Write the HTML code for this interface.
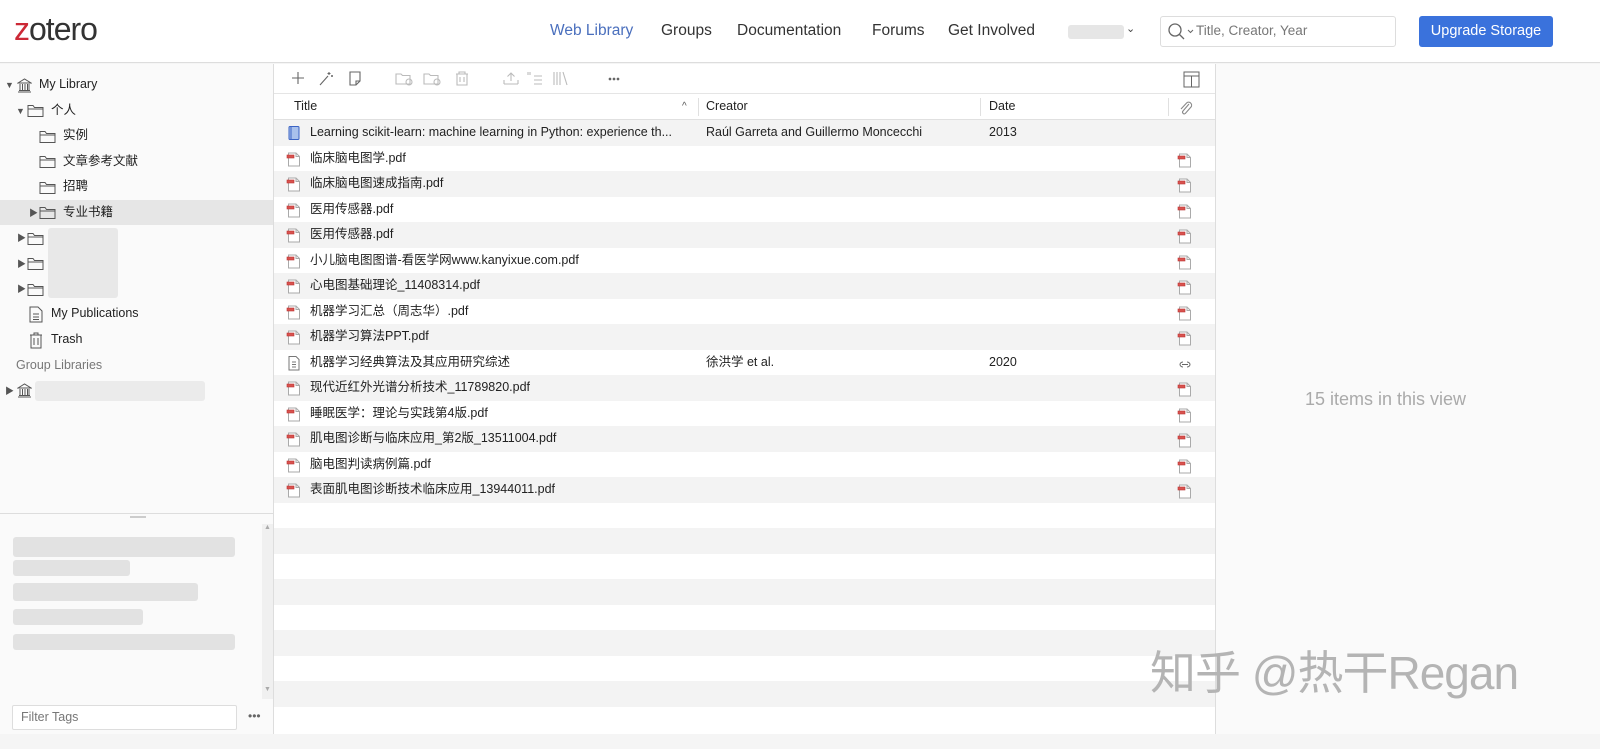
<!DOCTYPE html>
<html><head><meta charset="utf-8">
<style>
*{box-sizing:border-box;margin:0;padding:0}
body{width:1600px;height:749px;overflow:hidden;background:#f5f5f5;font-family:"Liberation Sans","Noto Sans CJK SC",sans-serif;font-size:12.5px;color:#222;position:relative}
.abs{position:absolute}
#top{left:0;top:0;width:1600px;height:63px;background:#fff;border-bottom:1px solid #ddd}
.nav{top:22px;font-size:15.5px;color:#333}
#left{left:0;top:64px;width:274px;height:670px;background:#fafafa;border-right:1px solid #ddd}
#mid{left:274px;top:64px;width:942px;height:670px;background:#fff;border-right:1px solid #ddd}
#right{left:1216px;top:64px;width:384px;height:670px;background:#fafafa}
.tr{position:absolute;height:25.5px;line-height:25.5px;white-space:nowrap;font-size:12.5px}
.row{position:absolute;left:0;width:941px;height:25.5px;line-height:25.5px;white-space:nowrap}
.g{background:#f3f3f3}
.blur{position:absolute;background:#e2e2e2;border-radius:3px}
svg{position:absolute}
</style></head><body>
<div id="top" class="abs">
  <div class="abs" style="left:14px;top:11px;font-size:32px;color:#333;letter-spacing:-1px"><span style="color:#cc2936">z</span>otero</div>
  <div class="abs nav" style="left:550px;color:#4a6fbd">Web Library</div>
  <div class="abs nav" style="left:661px">Groups</div>
  <div class="abs nav" style="left:737px">Documentation</div>
  <div class="abs nav" style="left:872px">Forums</div>
  <div class="abs nav" style="left:948px">Get Involved</div>
  <div class="blur" style="left:1068px;top:25px;width:56px;height:14px;background:#e6e6e6"></div>
  <div class="abs" style="left:1126px;top:22px;font-size:11px;color:#444">⌄</div>
  <div class="abs" style="left:1160px;top:16px;width:236px;height:31px;border:1px solid #ddd;border-radius:3px;background:#fff"></div>
  <svg style="left:1167px;top:22px" width="30" height="20"><circle cx="8" cy="8" r="6" fill="none" stroke="#666" stroke-width="1.3"/><line x1="12.5" y1="12.5" x2="17" y2="17" stroke="#666" stroke-width="1.3"/><path d="M21 8l2.5 2.5L26 8" fill="none" stroke="#666"/></svg>
  <div class="abs" style="left:1196px;top:23px;font-size:13.5px;color:#777">Title, Creator, Year</div>
  <div class="abs" style="left:1419px;top:16px;width:134px;height:31px;background:#3a72dc;border-radius:3px;color:#fff;font-size:14.5px;line-height:31px;text-align:center">Upgrade Storage</div>
</div>

<div id="left" class="abs">
  <div class="tr" style="left:5px;top:8px"><span style="font-size:9px;color:#555">▼</span></div>
  <svg style="left:17px;top:14px" width="15" height="15"><path d="M1 5L7.5 1L14 5Z M1 14H14 M2 12.5H13 M3 6v6 M5.5 6v6 M8 6v6 M10.5 6v6 M12 6v6" fill="none" stroke="#555"/></svg>
  <div class="tr" style="left:39px;top:8px">My Library</div>
  <div class="tr" style="left:16px;top:33.5px"><span style="font-size:9px;color:#555">▼</span></div>
  <svg style="left:27px;top:39px" width="18" height="15"><path d="M1 2.5H6L7.5 4.5H16V13.5H1Z M1 6H16" fill="none" stroke="#555"/></svg>
  <div class="tr" style="left:51px;top:33.5px">个人</div>
  <svg style="left:39px;top:65px" width="18" height="15"><path d="M1 2.5H6L7.5 4.5H16V13.5H1Z M1 6H16" fill="none" stroke="#555"/></svg>
  <div class="tr" style="left:63px;top:59px">实例</div>
  <svg style="left:39px;top:90px" width="18" height="15"><path d="M1 2.5H6L7.5 4.5H16V13.5H1Z M1 6H16" fill="none" stroke="#555"/></svg>
  <div class="tr" style="left:63px;top:84.5px">文章参考文献</div>
  <svg style="left:39px;top:116px" width="18" height="15"><path d="M1 2.5H6L7.5 4.5H16V13.5H1Z M1 6H16" fill="none" stroke="#555"/></svg>
  <div class="tr" style="left:63px;top:110px">招聘</div>
  <div class="abs" style="left:0;top:135.5px;width:273px;height:25.5px;background:#e6e6e6"></div>
  <div class="tr" style="left:29px;top:135.5px"><span style="font-size:9px;color:#555">▶</span></div>
  <svg style="left:39px;top:141px" width="18" height="15"><path d="M1 2.5H6L7.5 4.5H16V13.5H1Z M1 6H16" fill="none" stroke="#555"/></svg>
  <div class="tr" style="left:63px;top:135.5px">专业书籍</div>
  <div class="tr" style="left:17px;top:161px"><span style="font-size:9px;color:#555">▶</span></div>
  <svg style="left:27px;top:167px" width="18" height="15"><path d="M1 2.5H6L7.5 4.5H16V13.5H1Z M1 6H16" fill="none" stroke="#555"/></svg>
  <div class="tr" style="left:17px;top:186.5px"><span style="font-size:9px;color:#555">▶</span></div>
  <svg style="left:27px;top:192px" width="18" height="15"><path d="M1 2.5H6L7.5 4.5H16V13.5H1Z M1 6H16" fill="none" stroke="#555"/></svg>
  <div class="tr" style="left:17px;top:212px"><span style="font-size:9px;color:#555">▶</span></div>
  <svg style="left:27px;top:218px" width="18" height="15"><path d="M1 2.5H6L7.5 4.5H16V13.5H1Z M1 6H16" fill="none" stroke="#555"/></svg>
  <div class="blur" style="left:48px;top:164px;width:70px;height:70px;background:#e8e8e8"></div>
  <svg style="left:28px;top:242px" width="16" height="17"><path d="M2 1H10L14 5V16H2Z M5 8H11 M5 11H11 M5 13.5H11" fill="none" stroke="#555"/></svg>
  <div class="tr" style="left:51px;top:237px">My Publications</div>
  <svg style="left:28px;top:268px" width="16" height="17"><path d="M2 3H14 M6 3V1H10V3 M3 3V16H13V3 M6 6V13 M10 6V13" fill="none" stroke="#555"/></svg>
  <div class="tr" style="left:51px;top:263px">Trash</div>
  <div class="tr" style="left:16px;top:288.5px;color:#777">Group Libraries</div>
  <div class="tr" style="left:5px;top:314px"><span style="font-size:9px;color:#555">▶</span></div>
  <svg style="left:17px;top:319px" width="15" height="15"><path d="M1 5L7.5 1L14 5Z M1 14H14 M2 12.5H13 M3 6v6 M5.5 6v6 M8 6v6 M10.5 6v6 M12 6v6" fill="none" stroke="#555"/></svg>
  <div class="blur" style="left:35px;top:317px;width:170px;height:20px;background:#ebebeb"></div>
  <div class="abs" style="left:0;top:449px;width:273px;height:1px;background:#ddd"></div>
  <div class="abs" style="left:130px;top:452px;width:16px;height:2px;background:#ccc"></div>
  <div class="abs" style="left:262px;top:460px;width:11px;height:175px;background:#f0f0f0"></div>
  <div class="abs" style="left:264px;top:460px;font-size:7px;color:#aaa">▲</div>
  <div class="abs" style="left:264px;top:622px;font-size:7px;color:#aaa">▼</div>
  <div class="blur" style="left:13px;top:473px;width:222px;height:20px"></div>
  <div class="blur" style="left:13px;top:496px;width:117px;height:16px"></div>
  <div class="blur" style="left:13px;top:519px;width:185px;height:18px"></div>
  <div class="blur" style="left:13px;top:545px;width:130px;height:16px"></div>
  <div class="blur" style="left:13px;top:570px;width:222px;height:16px"></div>
  <div class="abs" style="left:12px;top:641px;width:225px;height:25px;border:1px solid #ddd;background:#fff;border-radius:2px;padding-left:8px;line-height:23px;color:#777;font-size:12.5px">Filter Tags</div>
  <div class="abs" style="left:248px;top:645px;color:#666;font-size:12px">•••</div>
</div>

<div id="mid" class="abs">
  <svg style="left:16px;top:6px" width="330" height="18" fill="none" stroke="#666" stroke-width="1.1">
    <path d="M2 8H14 M8 2V14"/>
    <path d="M30 15L38 6 M39 2v3 M37.5 3.5h3 M42 5v2 M41 6h2"/>
    <path d="M60 2H70V11L66 15H60Z M66 15V11H70"/>
    <g stroke="#bbb"><path d="M106 4H111L112.5 5.5H120V14H106Z"/><circle cx="119" cy="12" r="3"/>
    <path d="M134 4H139L140.5 5.5H148V14H134Z"/><circle cx="147" cy="12" r="3"/>
    <path d="M166 4H178 M169 4V2H175V4 M167 4V15H177V4 M170 7V12 M174 7V12"/>
    <path d="M214 14H228 M214 10V14 M228 10V14 M221 3V11 M217.5 6.5L221 3L224.5 6.5"/>
    <path d="M238 2v3 M240 2v3 M244 6H252 M244 10H252 M244 14H252"/>
    <path d="M264 2V15 M267 2V15 M270 2V15 M273 2L277 15"/></g>
    <circle cx="320" cy="9" r="0.8" fill="#666"/><circle cx="324" cy="9" r="0.8" fill="#666"/><circle cx="328" cy="9" r="0.8" fill="#666"/>
  </svg>
  <svg style="left:909px;top:7px" width="17" height="17"><path d="M1 1H16V16H1Z M1 5H16 M8.5 5V16" fill="none" stroke="#666"/></svg>
  <div class="abs" style="left:0;top:29px;width:941px;height:1px;background:#e5e5e5"></div>
  <div class="abs" style="left:0;top:30px;width:941px;height:26px;border-bottom:1px solid #e0e0e0"></div>
  <div class="tr" style="left:20px;top:30px">Title</div>
  <div class="tr" style="left:408px;top:30px;font-size:10px;color:#555">^</div>
  <div class="abs" style="left:424px;top:34px;width:1px;height:18px;background:#e0e0e0"></div>
  <div class="tr" style="left:432px;top:30px">Creator</div>
  <div class="abs" style="left:706px;top:34px;width:1px;height:18px;background:#e0e0e0"></div>
  <div class="tr" style="left:715px;top:30px">Date</div>
  <div class="abs" style="left:894px;top:34px;width:1px;height:18px;background:#e0e0e0"></div>
  <svg style="left:903px;top:36px" width="16" height="16"><path d="M12 4L6 11a1.7 1.7 0 0 0 2.4 2.4L14 7a3 3 0 0 0-4.2-4.2L4 9" fill="none" stroke="#888" stroke-width="1.1"/></svg>

  <div id="rows" class="abs" style="left:0;top:56px;width:941px;height:614px"></div>
</div>

<div id="right" class="abs">
  <div class="abs" style="left:89px;top:325px;font-size:18px;color:#aaa">15 items in this view</div>
</div>
<div class="abs" style="left:1150px;top:637px;font-size:46px;color:#b4b4b4;font-family:'Liberation Sans','Noto Sans CJK SC',sans-serif;white-space:nowrap;letter-spacing:-1px">知乎 @热干Regan</div>

<script>
var items=[
["Learning scikit-learn: machine learning in Python: experience th...","Raúl Garreta and Guillermo Moncecchi","2013","book",""],
["临床脑电图学.pdf","","","pdf","pdf"],
["临床脑电图速成指南.pdf","","","pdf","pdf"],
["医用传感器.pdf","","","pdf","pdf"],
["医用传感器.pdf","","","pdf","pdf"],
["小儿脑电图图谱-看医学网www.kanyixue.com.pdf","","","pdf","pdf"],
["心电图基础理论_11408314.pdf","","","pdf","pdf"],
["机器学习汇总（周志华）.pdf","","","pdf","pdf"],
["机器学习算法PPT.pdf","","","pdf","pdf"],
["机器学习经典算法及其应用研究综述","徐洪学 et al.","2020","doc","link"],
["现代近红外光谱分析技术_11789820.pdf","","","pdf","pdf"],
["睡眠医学：理论与实践第4版.pdf","","","pdf","pdf"],
["肌电图诊断与临床应用_第2版_13511004.pdf","","","pdf","pdf"],
["脑电图判读病例篇.pdf","","","pdf","pdf"],
["表面肌电图诊断技术临床应用_13944011.pdf","","","pdf","pdf"]];
var pdf='<path d="M2.5 2H10L13.5 5.5V15H2.5Z M10 2V5.5H13.5" fill="#fff" stroke="#aaa"/><rect x="1" y="4" width="7" height="3" fill="#d9534f" stroke="#b33"  stroke-width=".6"/>';
var icons={pdf:pdf,book:'<rect x="3" y="1.5" width="10" height="13" rx="1" fill="#a9c1ec" stroke="#3b63c4"/><path d="M5 1.5V14.5" stroke="#3b63c4"/>',doc:'<path d="M3 1.5H10L13 4.5V15H3Z M6 7H10 M6 9.5H10 M6 12H10" fill="#fff" stroke="#777"/>',link:'<path d="M6 6a3 2.5 0 1 0 0 5M10 6a3 2.5 0 1 1 0 5M5 8.5H11" fill="none" stroke="#666"/>'};
var h='';
for(var i=0;i<24;i++){var t=i*25.5;h+='<div class="row'+(i%2==0?' g':'')+'" style="top:'+t+'px">';
if(i<items.length){var it=items[i];
h+='<svg style="left:12px;top:5px" width="16" height="16">'+icons[it[3]]+'</svg>';
h+='<span style="position:absolute;left:36px">'+it[0]+'</span>';
h+='<span style="position:absolute;left:432px">'+it[1]+'</span>';
h+='<span style="position:absolute;left:715px">'+it[2]+'</span>';
if(it[4])h+='<svg style="left:903px;top:6px" width="16" height="16">'+icons[it[4]]+'</svg>';}
h+='</div>';}
document.getElementById('rows').innerHTML=h;
</script>
</body></html>
